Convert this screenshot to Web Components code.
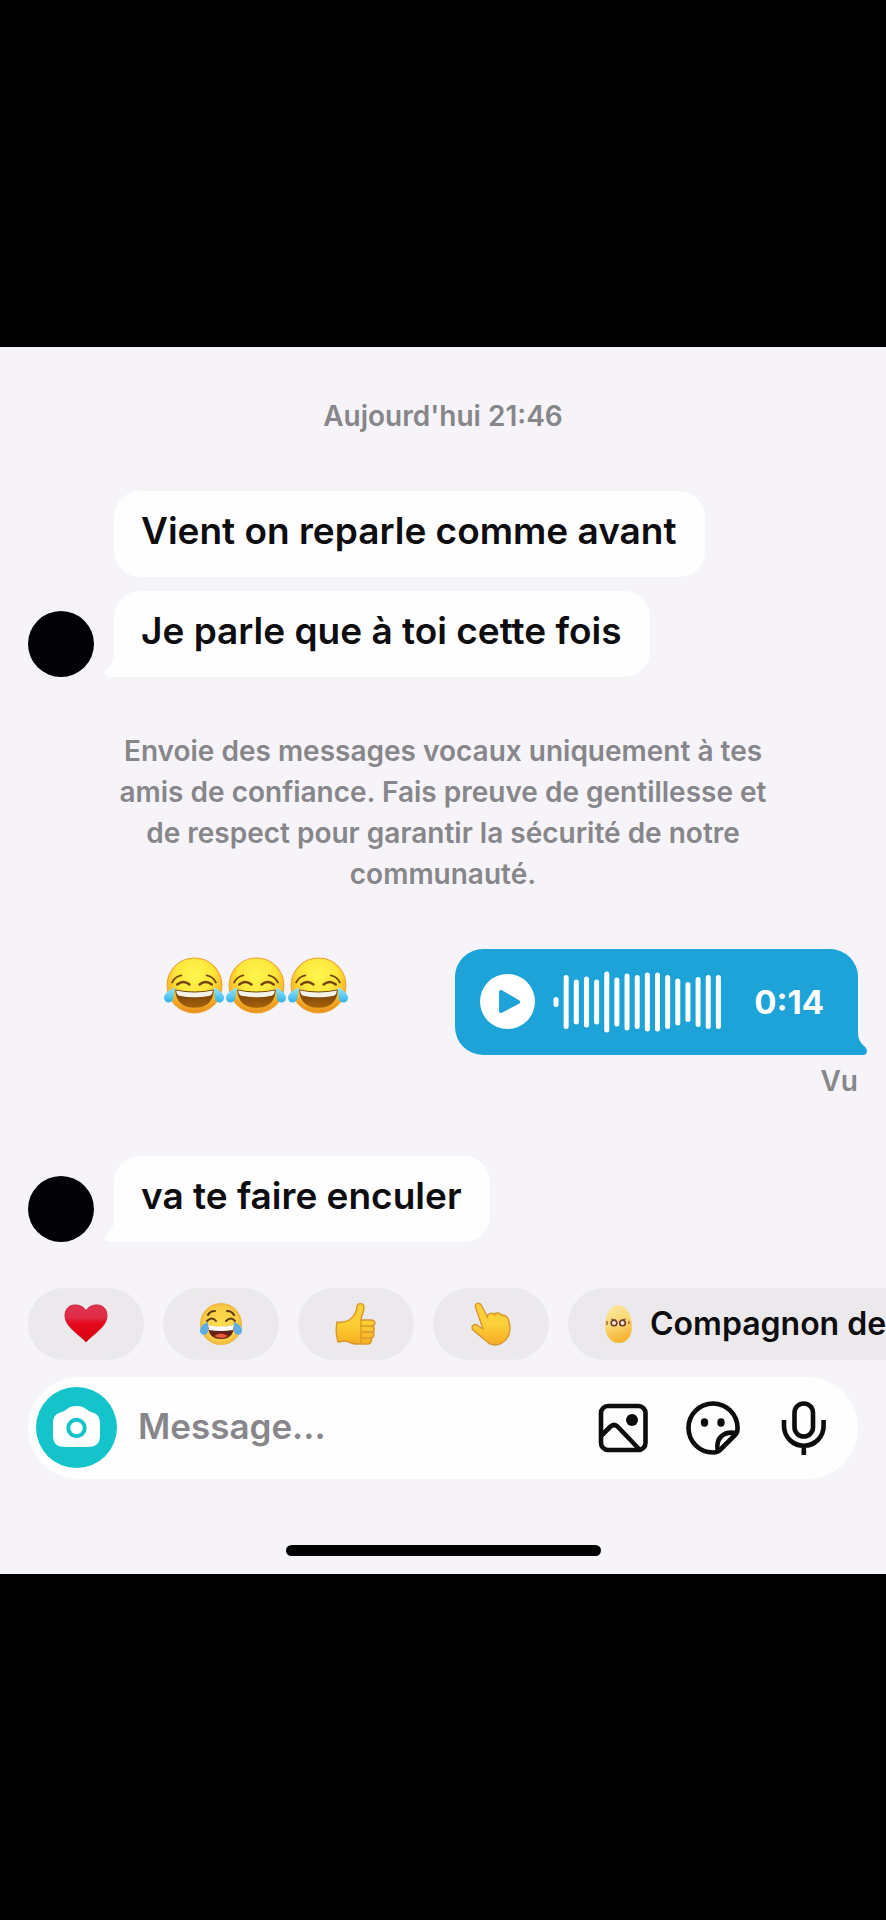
<!DOCTYPE html>
<html lang="fr">
<head>
<meta charset="utf-8">
<meta name="viewport" content="width=device-width, initial-scale=1">
<title>Messages</title>
<style>
body { margin: 0; background: #000; font-family: Inter, "Liberation Sans", sans-serif; }
</style>
</head>
<body>
<chat-screen>
  <chat-note class="stamp">Aujourd'hui 21:46</chat-note>
  <chat-thread>
    <chat-bubble>Vient on reparle comme avant</chat-bubble>
    <chat-bubble last>Je parle que à toi cette fois</chat-bubble>
  </chat-thread>
  <chat-note>Envoie des messages vocaux uniquement à tes amis de confiance. Fais preuve de gentillesse et de respect pour garantir la sécurité de notre communauté.</chat-note>
  <voice-row duration="0:14" status="Vu"></voice-row>
  <chat-thread>
    <chat-bubble last>va te faire enculer</chat-bubble>
  </chat-thread>
  <quick-replies slot="footer">
    <reply-chip icon="heart" label="Cœur"></reply-chip>
    <reply-chip icon="laugh" label="Rire"></reply-chip>
    <reply-chip icon="thumb" label="Pouce levé"></reply-chip>
    <reply-chip icon="point" label="Doigt pointé"></reply-chip>
    <reply-chip icon="egg" label="Compagnon">Compagnon de</reply-chip>
  </quick-replies>
  <message-bar slot="footer"></message-bar>
</chat-screen>

<script>
const define = (name, render) => customElements.define(name, class extends HTMLElement {
  connectedCallback() {
    if (this.shadowRoot) return;
    this.attachShadow({ mode: 'open' }).innerHTML = render(this);
  }
});

const art = {
  joy: `<svg viewBox="0 0 61 61" width="62" height="62" role="img" aria-label="Rire aux larmes">
    <defs><radialGradient id="f" cx=".5" cy=".3" r=".68"><stop offset="0" stop-color="#fff64e"/><stop offset=".5" stop-color="#fde63a"/><stop offset=".78" stop-color="#f8bb29"/><stop offset="1" stop-color="#e8901c"/></radialGradient>
    <linearGradient id="t" x2="0" y2="1"><stop offset="0" stop-color="#9be6fa"/><stop offset="1" stop-color="#2fb2ea"/></linearGradient>
    <linearGradient id="m" x2="0" y2="1"><stop offset="0" stop-color="#6b3a09"/><stop offset="1" stop-color="#a8640c"/></linearGradient></defs>
    <circle cx="31" cy="31" r="27" fill="url(#f)" stroke="#efa12c" stroke-width="1"/>
    <g fill="none" stroke="#75420c" stroke-linecap="round"><path d="M9 28q3-6 9-7M52 28q-3-6-9-7" stroke-width="1.800"/><path d="M14 30q6-5 12 0M36 30q6-5 12 0" stroke-width="2.400"/></g>
    <path d="M12 35q19 4 38 0-1 18-19 18T12 35z" fill="url(#m)"/>
    <path d="M13 36q18 4 36 0 0 4-3 5-15 3-30 0-3-1-3-5z" fill="#f5f2e8"/>
    <path d="M12 33c-4 1-11 6-11 10 0 6 8 6 9 1zM50 33c4 1 10 6 10 10 0 6-8 6-9 1z" fill="url(#t)"/></svg>`,
  heart: `<svg viewBox="0 0 44 44" width="44" height="44" aria-hidden="true"><defs><linearGradient id="h" x2="0" y2="1"><stop offset="0" stop-color="#df3450"/><stop offset=".35" stop-color="#e02a43"/><stop offset=".5" stop-color="#e6071c"/><stop offset="1" stop-color="#d9000d"/></linearGradient></defs>
    <path d="M22 40C16 33 1 25 1 14 1 6 6 3 11 3c5 0 9 2 11 6 2-4 6-6 11-6s10 3 10 11c0 11-15 19-21 26z" fill="url(#h)" stroke="#c92640" stroke-width="1"/></svg>`,
  laugh: `<svg viewBox="0 0 44 44" width="44" height="44" aria-hidden="true"><defs><radialGradient id="l" r=".55"><stop offset="0" stop-color="#ffdf50"/><stop offset=".75" stop-color="#f8cb45"/><stop offset="1" stop-color="#e5a63c"/></radialGradient></defs>
    <circle cx="22" cy="22" r="21" fill="url(#l)"/>
    <path d="M9 13q2-4 7-4M35 13q-2-4-7-4M8 19q5-5 9 0M27 19q5-5 9 0" fill="none" stroke="#5f3a18" stroke-width="2" stroke-linecap="round"/>
    <path d="M9 23q13 4 26 0 0 14-13 14T9 23z" fill="#632319"/><path d="M9 23q13 3 26 0l-1 5q-12 2-24 0z" fill="#fff"/><path d="M15 34q7-5 14 0-6 4-14 0z" fill="#ed5636"/>
    <path d="M9 20c-5 2-8 5-8 9 0 5 8 5 8 0zM35 20c5 2 8 5 8 9 0 5-8 5-8 0z" fill="#5eaee6"/></svg>`,
  thumb: `<svg viewBox="0 0 44 44" width="44" height="44" aria-hidden="true"><defs><linearGradient id="u" x2="0" y2="1"><stop offset=".5" stop-color="#fbcf34"/><stop offset="1" stop-color="#f6ae22"/></linearGradient></defs>
    <g fill="url(#u)" stroke="#d9952c" stroke-width="1.400" stroke-linejoin="round"><path d="M3 20q7 1 12-2 7-5 8-13c0-5 7-4 7 0 0 6-3 9-3 13h10c5 0 5 6 1 6 3 1 3 6 0 6 3 1 2 6-1 6 1 1 1 6-3 6H22c-4 0-8-3-12-3l-6 1q-3-10-1-20z"/></g>
    <path d="M27 18v23M27 24h11M27 30h11M27 36h10" fill="none" stroke="#dc962b" stroke-width="1.300"/></svg>`,
  point: `<svg viewBox="0 0 44 44" width="44" height="44" aria-hidden="true"><defs><linearGradient id="p" x2="0" y2="1"><stop offset=".5" stop-color="#fbd039"/><stop offset="1" stop-color="#f6aa24"/></linearGradient></defs>
    <path d="M6.500 5C5.500 1 11 0 12.500 3.500L18 14c2-3 5-3.500 7-2 3-1.500 6-1 7.500 1 3 0 6 2 7 5 2 6 1.500 12 0 16-3 5-8 9-13 9-3 0-6-1-8-3L5 29c-4-3-1-8 3-6l6 4z" fill="url(#p)" stroke="#d7962f" stroke-width="1.400" stroke-linejoin="round"/><path d="M18 14l1 2.500M25 12l1.500 2M32.500 13l1 1.500" stroke="#d7962f" stroke-width="1.200"/></svg>`,
  egg: `<svg viewBox="0 0 28 44" width="28" height="44" aria-hidden="true"><defs><linearGradient id="e" x2=".3" y2="1"><stop offset="0" stop-color="#fbe9a4"/><stop offset=".55" stop-color="#f9d974"/><stop offset="1" stop-color="#f5b536"/></linearGradient></defs>
    <path d="M14 3c8 0 14 10 14 21 0 10-5 17-13 17S2 35 1 25 6 3 14 3z" fill="url(#e)"/>
    <g fill="#f4e7dc" stroke="#70362c" stroke-width="1.600"><circle cx="10" cy="21" r="2.800"/><circle cx="18.500" cy="21" r="2.800"/></g><path d="M7 17l5 1M22 17l-5 1M3 19v4M25 19v3" stroke="#84503c" stroke-width="1.200"/></svg>`
};

/* Tail at the lower outer corner of a bubble, drawn pointing right. */
const tail = `<svg class="tail" viewBox="0 0 30 30" width="30" height="30" aria-hidden="true"><path d="M0 0H21V8Q21 16 27 21C32 25 30 30 26 30H0z" fill="currentColor"/></svg>`;

define('chat-screen', () => `<style>
  :host { min-height: 100vh; display: flex; flex-direction: column; justify-content: center; }
  main { background: #f6f4f8; overflow: hidden; padding-top: 49px; }
  section { display: flex; flex-direction: column; gap: 54px; padding: 0 28px; }
  footer { padding-top: 46px; }
  .home { width: 315px; height: 11px; border-radius: 6px; background: #000; margin: 66px auto 18px; }
</style><main><section><slot></slot></section><footer><slot name="footer"></slot><div class="home"></div></footer></main>`);

define('chat-note', () => `<style>
  :host { display: block; padding: 0 86px; text-align: center; font-size: 28px; line-height: 41px; font-weight: 600; color: #87868a; }
</style><slot></slot>`);

define('chat-thread', () => `<style>
  :host { display: flex; align-items: flex-end; gap: 20px; }
  .avatar { width: 66px; height: 66px; border-radius: 50%; background: #020104; flex: none; }
  .list { display: flex; flex-direction: column; align-items: flex-start; gap: 14px; }
</style><div class="avatar" role="img" aria-label="Avatar"></div><div class="list"><slot></slot></div>`);

define('chat-bubble', el => `<style>
  :host { display: block; position: relative; background: #fffeff; border-radius: 26px; padding: 17px 28px 23px 27px; font-size: 37px; line-height: 46px; font-weight: 600; color: #0d0c0f; }
  :host([last]) { border-bottom-left-radius: 0; }
  .tail { position: absolute; left: -9px; bottom: 0; color: #fffeff; transform: scaleX(-1); }
</style>${el.hasAttribute('last') ? tail : ''}<slot></slot>`);

const bars = [10, 54, 45, 51, 45, 61, 49, 57, 54, 59, 59, 54, 47, 40, 50, 54, 54];
define('voice-row', el => `<style>
  :host { display: flex; justify-content: space-between; align-items: flex-start; padding-left: 135px; }
  .faces { display: flex; padding-top: 5px; }
  .sent { text-align: right; }
  .voice { position: relative; display: flex; align-items: center; height: 106px; padding: 0 34px 0 25px; border-radius: 28px 28px 0 28px; background: #1da3d7; color: #fff; }
  button { width: 55px; height: 55px; padding: 0; border: 0; border-radius: 50%; background: #fff; color: #1da3d7; }
  svg { display: block; }
  .wave { margin: 0 32px 0 18px; }
  .tail { position: absolute; right: -9px; bottom: 0; color: #1da3d7; }
  time { font-size: 33px; line-height: 40px; font-weight: 700; }
  .status { font-size: 28px; line-height: 41px; font-weight: 600; color: #87868a; margin-top: 6px; }
</style><div class="faces">${art.joy.repeat(3)}</div>
<div class="sent"><div class="voice">${tail}
  <button aria-label="Lire"><svg viewBox="0 0 55 55" width="55" height="55"><path d="M21 18v19l17-9z" fill="currentColor" stroke="currentColor" stroke-width="4" stroke-linejoin="round"/></svg></button>
  <svg class="wave" viewBox="0 0 169 64" width="169" height="64" aria-hidden="true">${bars.map((h, i) => `<rect x="${(i * 10.15 + .5).toFixed(2)}" y="${32 - h / 2}" width="5" height="${h}" rx="2.500" fill="#fff"/>`).join('')}</svg>
  <time>${el.getAttribute('duration')}</time></div>
  <div class="status">${el.getAttribute('status')}</div></div>`);

define('quick-replies', () => `<style>
  :host { display: flex; gap: 19px; padding-left: 28px; overflow: hidden; }
</style><slot></slot>`);

define('reply-chip', el => `<style>
  :host { display: block; flex: none; }
  button { display: flex; align-items: center; gap: 18px; height: 72px; padding: 0 36px; border: 0; border-radius: 36px; background: #ebe9eb; color: #0d0c0f; font: inherit; font-size: 32px; line-height: 40px; font-weight: 600; white-space: nowrap; }
</style><button aria-label="${el.getAttribute('label')}">${art[el.getAttribute('icon')]}<slot></slot></button>`);

define('message-bar', () => `<style>
  :host { display: flex; align-items: center; height: 102px; margin: 17px 28px 0; padding: 0 27px 0 8px; box-sizing: border-box; border-radius: 51px; background: #fffeff; color: #0d0c0f; }
  button { padding: 0; border: 0; background: none; color: inherit; flex: none; }
  svg { display: block; }
  .camera { width: 81px; height: 81px; border-radius: 50%; background: #14c4ca; color: #fff; }
  input { flex: 1; min-width: 0; height: 56px; margin: 0 20px 4px 21px; padding: 0; border: 0; outline: 0; background: none; font: inherit; font-size: 35px; font-weight: 600; color: inherit; }
  input::placeholder { color: #87868a; opacity: 1; }
  .tools { display: flex; gap: 34px; }
</style>
<button class="camera" aria-label="Appareil photo"><svg viewBox="0 0 81 81" width="81" height="81"><path d="M31 22c4-4 15-4 19 0 2 2 5 3 8 4 5 2 6 6 6 12v10c0 9-4 12-13 12H30c-9 0-13-3-13-12V38c0-6 1-10 6-12 3-1 6-2 8-4z" fill="currentColor"/><circle cx="40.500" cy="41" r="8.200" fill="none" stroke="#14c4ca" stroke-width="4"/></svg></button>
<input type="text" placeholder="Message..." aria-label="Message">
<div class="tools">
<button aria-label="Image"><svg viewBox="0 0 56 56" width="56" height="56" fill="none" stroke="currentColor" stroke-width="4.600"><rect x="6" y="6" width="44.500" height="44" rx="7"/><path d="M6 36l9-9q4-4 8 0l21 22"/><circle cx="37" cy="20" r="6" fill="currentColor" stroke="none"/></svg></button>
<button aria-label="Sticker"><svg viewBox="0 0 56 56" width="56" height="56" fill="none" stroke="currentColor" stroke-width="4.600" stroke-linejoin="round"><path d="M28 52.500A24.500 24.500 0 1 1 52.500 28Q53 32 50 35L36 49Q33 52.500 28 52.500z"/><path d="M32.500 50C31 38 38 31 51 33"/><ellipse cx="19.500" cy="22.500" rx="3.700" ry="4.200" fill="currentColor" stroke="none"/><ellipse cx="36" cy="22.500" rx="3.700" ry="4.200" fill="currentColor" stroke="none"/></svg></button>
<button aria-label="Micro"><svg viewBox="0 0 56 56" width="56" height="56" fill="none" stroke="currentColor" stroke-width="4.600"><rect x="19.500" y="3.500" width="18.500" height="33" rx="9.200"/><path d="M9 20v6a19.800 19.800 0 0 0 39.600 0v-6M28.800 46v9"/></svg></button>
</div>`);
</script>
</body>
</html>
